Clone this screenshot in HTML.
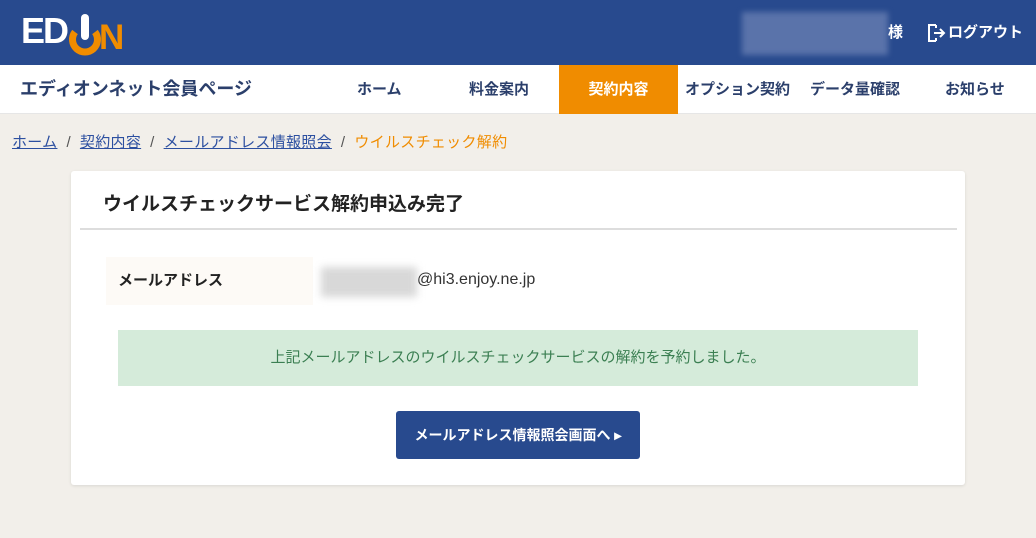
<!DOCTYPE html>
<html><head><meta charset="utf-8"><style>
*{margin:0;padding:0;box-sizing:border-box}
body{width:1036px;height:538px;background:#f2efea;font-family:"Liberation Sans","Noto Sans CJK JP",sans-serif;overflow:hidden;position:relative}
.hd{position:absolute;left:0;top:0;width:1036px;height:65px;background:#284a8e}
.nav{position:absolute;left:0;top:65px;width:1036px;height:49px;background:#fff;border-bottom:1px solid #e6e6e6}
.nav span{position:absolute;top:0;line-height:49px;font-size:15px;font-weight:bold;color:#2b3f6b}
.act{background:#f08c00;color:#fff!important;text-align:center}
.bc{position:absolute;top:131px;left:12px;font-size:15px;color:#555;letter-spacing:.3px}
.bc a{color:#2c4fa0;text-decoration:underline}
.bc i{font-style:normal;margin:0 9px}
.card{position:absolute;left:71px;top:171px;width:894px;height:314px;background:#fff;border-radius:3px;box-shadow:0 1px 3px rgba(0,0,0,.1)}
</style></head><body>
<div class="hd">
 <div style="position:absolute;left:21px;top:12px;font-size:36px;line-height:38px;font-weight:900;color:#fff;letter-spacing:-2px">ED</div>
 <svg style="position:absolute;left:68px;top:12px" width="34" height="44" viewBox="0 0 34 44"><path d="M7 20 A12.5 12.5 0 1 0 27 20" fill="none" stroke="#f08c00" stroke-width="7"/><rect x="13" y="2" width="8" height="26" rx="4" fill="#fff"/></svg>
 <div style="position:absolute;left:99px;top:20px;font-size:35px;line-height:36px;font-weight:900;color:#f08c00;letter-spacing:-1px">N</div>
 <div style="position:absolute;left:742px;top:12px;width:146px;height:43px;background:#5a73aa;filter:blur(3px)"></div>
 <div style="position:absolute;left:888px;top:21px;font-size:15px;font-weight:bold;color:#fff">様</div>
 <svg style="position:absolute;left:926px;top:23px" width="20" height="20" viewBox="0 0 20 20"><path d="M10 2H3v16h7M10 5V2M10 18v-3M8 10h10M14 6l4 4-4 4" fill="none" stroke="#fff" stroke-width="2"/></svg>
 <div style="position:absolute;left:948px;top:21px;font-size:15px;font-weight:bold;color:#fff">ログアウト</div>
</div>
<div class="nav">
 <span style="left:20px;font-size:18px">エディオンネット会員ページ</span>
 <span style="left:357px">ホーム</span>
 <span style="left:469px">料金案内</span>
 <span class="act" style="left:559px;width:119px">契約内容</span>
 <span style="left:685px">オプション契約</span>
 <span style="left:810px">データ量確認</span>
 <span style="left:945px">お知らせ</span>
</div>
<div class="bc"><a>ホーム</a><i>/</i><a>契約内容</a><i>/</i><a>メールアドレス情報照会</a><i>/</i><span style="color:#f08c00">ウイルスチェック解約</span></div>
<div class="card">
 <div style="position:absolute;left:32px;top:18px;font-size:19px;font-weight:bold;color:#222">ウイルスチェックサービス解約申込み完了</div>
 <div style="position:absolute;left:9px;top:57px;width:877px;height:2px;background:#ddd"></div>
 <div style="position:absolute;left:35px;top:86px;width:207px;height:48px;background:#fdfaf6;font-size:15px;font-weight:bold;line-height:48px;padding-left:12px;color:#222">メールアドレス</div>
 <div style="position:absolute;left:250px;top:96px;width:96px;height:30px;background:#d8d8d8;filter:blur(4px)"></div>
 <div style="position:absolute;left:346px;top:100px;font-size:16px;color:#333">@hi3.enjoy.ne.jp</div>
 <div style="position:absolute;left:47px;top:159px;width:800px;height:56px;background:#d5ebda;color:#3b7f52;font-size:15px;line-height:56px;text-align:center">上記メールアドレスのウイルスチェックサービスの解約を予約しました。</div>
 <div style="position:absolute;left:325px;top:240px;width:244px;height:48px;background:#284a8e;border-radius:3px;color:#fff;font-size:14px;font-weight:bold;line-height:48px;text-align:center">メールアドレス情報照会画面へ ▸</div>
</div>
</body></html>
